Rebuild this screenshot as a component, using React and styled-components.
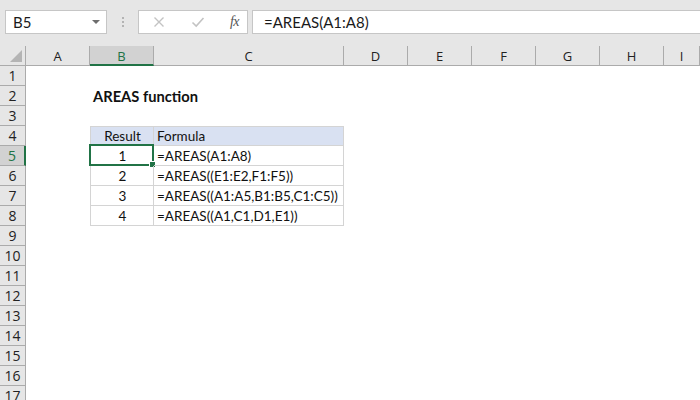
import React from "react";
import styled, { createGlobalStyle, css } from "styled-components";

const Global = createGlobalStyle`
  html, body { margin: 0; padding: 0; background: #fff; }
  #root { width: 700px; height: 400px; overflow: hidden; }
`;

const Page = styled.div`
  width: 700px;
  height: 400px;
  overflow: hidden;
  display: flex;
  flex-direction: column;
  background: #fff;
`;

const Toolbar = styled.div`
  height: 46px;
  flex: none;
  background: #e6e6e6;
  display: flex;
  align-items: flex-start;
  padding: 10px 0 0 5px;
  box-sizing: border-box;
`;

const Box = styled.div`
  height: 24px;
  box-sizing: border-box;
  background: #fff;
  border: 1px solid #c6c6c6;
  display: flex;
  align-items: center;
  font-family: "Lato", "Liberation Sans", sans-serif;
  font-size: 15px;
  color: #1a1a1a;
`;

const NameBox = styled(Box)`
  width: 102px;
  padding: 0 6px 0 7px;
  justify-content: space-between;
`;

const Caret = styled.span`
  width: 0;
  height: 0;
  border-left: 4px solid transparent;
  border-right: 4px solid transparent;
  border-top: 4px solid #6d6d6d;
`;

const Dots = styled.div`
  width: 31px;
  height: 24px;
  display: flex;
  flex-direction: column;
  align-items: center;
  justify-content: center;
  gap: 2px;
  span {
    width: 2px;
    height: 2px;
    background: #b3b3b3;
  }
`;

const FnBox = styled(Box)`
  width: 110px;
  justify-content: space-between;
  padding: 0 8px 0 13px;
`;

const FxLabel = styled.span`
  font-family: "Liberation Serif", serif;
  font-style: italic;
  font-size: 14px;
  color: #555;
  letter-spacing: -0.5px;
`;

const FormulaBox = styled(Box)`
  flex: 1;
  margin-left: 4px;
  border-right: none;
  padding-left: 11px;
`;

const Sheet = styled.div`
  flex: 1;
  display: grid;
  grid-template-columns: 26px 64px 64px 190px 64px 64px 64px 64px 64px 1fr;
  grid-template-rows: 20px;
  grid-auto-rows: 20px;
  font-family: "Lato", "Liberation Sans", sans-serif;
`;

const ColHead = styled.div`
  box-sizing: border-box;
  background: ${(p) => (p.$active ? "#d2d2d2" : "#e6e6e6")};
  border-right: 1px solid #ababab;
  border-bottom: ${(p) => (p.$active ? "2px solid #217346" : "1px solid #ababab")};
  color: ${(p) => (p.$active ? "#217346" : "#222")};
  font-family: "Open Sans", "Liberation Sans", sans-serif;
  font-size: 13px;
  display: flex;
  align-items: center;
  justify-content: center;
  padding-top: ${(p) => (p.$active ? "1px" : "0")};
  &:last-child { border-right: none; }
`;

const Corner = styled.div`
  position: relative;
  box-sizing: border-box;
  background: #e6e6e6;
  border-right: 1px solid #ababab;
  border-bottom: 1px solid #ababab;
  &::after {
    content: "";
    position: absolute;
    right: 3px;
    bottom: 3px;
    width: 0;
    height: 0;
    border-left: 12px solid transparent;
    border-bottom: 12px solid #b4b4b4;
  }
`;

const RowHead = styled.div`
  box-sizing: border-box;
  background: ${(p) => (p.$active ? "#d2d2d2" : "#e6e6e6")};
  border-bottom: 1px solid #ababab;
  border-right: ${(p) => (p.$active ? "2px solid #217346" : "1px solid #ababab")};
  color: ${(p) => (p.$active ? "#217346" : "#222")};
  font-family: "Open Sans", "Liberation Sans", sans-serif;
  font-size: 14px;
  display: flex;
  align-items: center;
  justify-content: center;
`;

const Cell = styled.div`
  position: relative;
  box-sizing: border-box;
  font-size: 13.5px;
  color: #111;
  display: flex;
  align-items: center;
  white-space: nowrap;
  padding: 0 2px 0 3px;
  justify-content: ${(p) => (p.$center ? "center" : "flex-start")};
  ${(p) =>
    p.$bold &&
    css`
      font-weight: 700;
      font-size: 14.7px;
      overflow: visible;
    `}
  ${(p) =>
    p.$table &&
    css`
      border-right: 1px solid #d4d4d4;
      border-bottom: 1px solid #d4d4d4;
    `}
  ${(p) => p.$top && css`border-top: 1px solid #d4d4d4;`}
  ${(p) => p.$left && css`border-left: 1px solid #d4d4d4;`}
  ${(p) => p.$head && css`background: #d9e1f2;`}
`;

const Selection = styled.div`
  position: absolute;
  left: -2px;
  top: -2px;
  right: -1px;
  bottom: -1px;
  border: 2px solid #217346;
  pointer-events: none;
  &::after {
    content: "";
    position: absolute;
    right: -4px;
    bottom: -4px;
    width: 5px;
    height: 5px;
    background: #217346;
    border: 1px solid #fff;
  }
`;

const Icon = ({ children }) => (
  <svg width="14" height="14" viewBox="0 0 14 14" fill="none">
    {children}
  </svg>
);

const cols = ["A", "B", "C", "D", "E", "F", "G", "H", "I"];

const tableRows = [
  ["1", "=AREAS(A1:A8)"],
  ["2", "=AREAS((E1:E2,F1:F5))"],
  ["3", "=AREAS((A1:A5,B1:B5,C1:C5))"],
  ["4", "=AREAS((A1,C1,D1,E1))"],
];

function rowCells(r) {
  const cells = [];
  for (let c = 0; c < 9; c++) {
    const key = `${r}-${c}`;
    if (r === 2 && c === 1) {
      cells.push(
        <Cell key={key} $bold>
          AREAS function
        </Cell>
      );
    } else if (r >= 4 && r <= 8 && (c === 1 || c === 2)) {
      const isHead = r === 4;
      const data = isHead ? ["Result", "Formula"] : tableRows[r - 5];
      cells.push(
        <Cell
          key={key}
          $table
          $head={isHead}
          $top={isHead}
          $left={c === 1}
          $center={c === 1}
        >
          {data[c - 1]}
          {r === 5 && c === 1 && <Selection />}
        </Cell>
      );
    } else {
      cells.push(<Cell key={key} />);
    }
  }
  return cells;
}

export default function App() {
  const rows = Array.from({ length: 17 }, (_, i) => i + 1);
  return (
    <>
      <Global />
      <Page>
        <Toolbar>
          <NameBox>
            <span>B5</span>
            <Caret />
          </NameBox>
          <Dots>
            <span />
            <span />
            <span />
          </Dots>
          <FnBox>
            <Icon>
              <path d="M2.5 2.5 L11.5 11.5 M11.5 2.5 L2.5 11.5" stroke="#c3c3c3" strokeWidth="1.4" />
            </Icon>
            <Icon>
              <path d="M1.5 7.5 L5.2 11 L12.5 3" stroke="#c3c3c3" strokeWidth="1.6" />
            </Icon>
            <FxLabel>fx</FxLabel>
          </FnBox>
          <FormulaBox>=AREAS(A1:A8)</FormulaBox>
        </Toolbar>
        <Sheet>
          <Corner />
          {cols.map((c) => (
            <ColHead key={c} $active={c === "B"}>
              {c}
            </ColHead>
          ))}
          {rows.map((r) => (
            <React.Fragment key={r}>
              <RowHead $active={r === 5}>{r}</RowHead>
              {rowCells(r)}
            </React.Fragment>
          ))}
        </Sheet>
      </Page>
    </>
  );
}
